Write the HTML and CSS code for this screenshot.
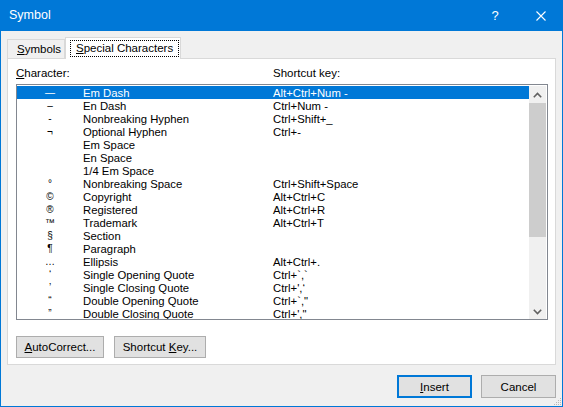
FILE: index.html
```html
<!DOCTYPE html>
<html>
<head>
<meta charset="utf-8">
<link rel="stylesheet" href="styles.css">
</head>
<body>
<div class="window">
  <div class="titlebar">
    <span class="title">Symbol</span>
    <span class="help">?</span>
    <span class="close"><svg width="10" height="10" viewBox="0 0 10 10"><path d="M0.5 0.5 L9.5 9.5 M9.5 0.5 L0.5 9.5" stroke="#fff" stroke-width="1.1" fill="none"/></svg></span>
  </div>
  <div class="content">
    <div class="tabs">
      <div class="tab"><u>S</u>ymbols</div>
      <div class="tab active"><span class="focus"><u>S</u>pecial Characters</span></div>
    </div>
    <div class="panel">
      <div class="heads">
        <span class="head-char"><u>C</u>haracter:</span>
        <span class="head-key">Shortcut key:</span>
      </div>
      <div class="list">
        <div class="rows">
          <div class="row sel"><span class="sym">—</span><span class="name">Em Dash</span><span class="key">Alt+Ctrl+Num -</span></div>
          <div class="row"><span class="sym">–</span><span class="name">En Dash</span><span class="key">Ctrl+Num -</span></div>
          <div class="row"><span class="sym">-</span><span class="name">Nonbreaking Hyphen</span><span class="key">Ctrl+Shift+_</span></div>
          <div class="row"><span class="sym">¬</span><span class="name">Optional Hyphen</span><span class="key">Ctrl+-</span></div>
          <div class="row"><span class="sym"></span><span class="name">Em Space</span><span class="key"></span></div>
          <div class="row"><span class="sym"></span><span class="name">En Space</span><span class="key"></span></div>
          <div class="row"><span class="sym"></span><span class="name">1/4 Em Space</span><span class="key"></span></div>
          <div class="row"><span class="sym">°</span><span class="name">Nonbreaking Space</span><span class="key">Ctrl+Shift+Space</span></div>
          <div class="row"><span class="sym">©</span><span class="name">Copyright</span><span class="key">Alt+Ctrl+C</span></div>
          <div class="row"><span class="sym">®</span><span class="name">Registered</span><span class="key">Alt+Ctrl+R</span></div>
          <div class="row"><span class="sym">™</span><span class="name">Trademark</span><span class="key">Alt+Ctrl+T</span></div>
          <div class="row"><span class="sym">§</span><span class="name">Section</span><span class="key"></span></div>
          <div class="row"><span class="sym">¶</span><span class="name">Paragraph</span><span class="key"></span></div>
          <div class="row"><span class="sym">…</span><span class="name">Ellipsis</span><span class="key">Alt+Ctrl+.</span></div>
          <div class="row"><span class="sym">‘</span><span class="name">Single Opening Quote</span><span class="key">Ctrl+`,`</span></div>
          <div class="row"><span class="sym">’</span><span class="name">Single Closing Quote</span><span class="key">Ctrl+',‘</span></div>
          <div class="row"><span class="sym">“</span><span class="name">Double Opening Quote</span><span class="key">Ctrl+`,"</span></div>
          <div class="row"><span class="sym">”</span><span class="name">Double Closing Quote</span><span class="key">Ctrl+',"</span></div>
        </div>
        <div class="scrollbar">
          <div class="sb-btn"><svg width="9" height="6" viewBox="0 0 9 6"><path d="M0.8 5.2 L4.5 1.5 L8.2 5.2" stroke="#606060" stroke-width="1.6" fill="none"/></svg></div>
          <div class="sb-track"><div class="sb-thumb"></div></div>
          <div class="sb-btn"><svg width="9" height="6" viewBox="0 0 9 6"><path d="M0.8 0.8 L4.5 4.5 L8.2 0.8" stroke="#606060" stroke-width="1.6" fill="none"/></svg></div>
        </div>
      </div>
      <div class="panel-buttons">
        <button class="btn btn-auto"><u>A</u>utoCorrect...</button>
        <button class="btn btn-short">Shortcut <u>K</u>ey...</button>
      </div>
    </div>
    <div class="footer">
      <button class="btn btn-foot default"><u>I</u>nsert</button>
      <button class="btn btn-foot">Cancel</button>
    </div>
  </div>
  <svg class="grip" width="10" height="10" viewBox="0 0 10 10"><g fill="#b8b8b8"><rect x="8" y="2" width="1" height="1"/><rect x="6" y="4" width="1" height="1"/><rect x="8" y="4" width="1" height="1"/><rect x="4" y="6" width="1" height="1"/><rect x="6" y="6" width="1" height="1"/><rect x="8" y="6" width="1" height="1"/><rect x="2" y="8" width="1" height="1"/><rect x="4" y="8" width="1" height="1"/><rect x="6" y="8" width="1" height="1"/><rect x="8" y="8" width="1" height="1"/></g></svg>
</div>
</body>
</html>
```
FILE: styles.css
```css
html, body {
  margin: 0;
  padding: 0;
}
body {
  font-family: "Liberation Sans", Arial, sans-serif;
  font-size: 11.5px;
  color: #000;
  background: #f0f0f0;
}
u {
  text-decoration: underline;
  text-underline-offset: 1px;
}
.window {
  position: relative;
  width: 563px;
  height: 407px;
  box-sizing: border-box;
  border: 1px solid #0078d7;
  border-top: none;
  background: #f0f0f0;
  display: flex;
  flex-direction: column;
  overflow: hidden;
}
.titlebar {
  height: 31px;
  flex: none;
  background: #0078d7;
  color: #fff;
  display: flex;
  align-items: center;
  padding-left: 8px;
  font-size: 12.5px;
}
.title {
  flex: 1;
  line-height: 16px;
  padding-bottom: 1px;
}
.help {
  font-size: 13px;
  width: 14px;
  text-align: center;
  margin-right: 34px;
  padding-bottom: 1px;
}
.close {
  display: flex;
  margin-right: 16px;
}
.content {
  flex: 1;
  display: flex;
  flex-direction: column;
  padding: 7px 6px 7px 6px;
}
.tabs {
  height: 21px;
  display: flex;
  align-items: flex-end;
  margin-bottom: -1px;
}
.tab {
  box-sizing: border-box;
  height: 19px;
  border: 1px solid #d9d9d9;
  border-bottom: none;
  background: #f0f0f0;
  padding: 1px 0 0 9px;
  width: 58px;
  line-height: 17px;
  margin-bottom: 1px;
}
.tab.active {
  position: relative;
  z-index: 1;
  height: 22px;
  width: 116px;
  margin-bottom: 0;
  border-left: 1px solid #d9d9d9;
  background: #fff;
  padding: 2px 0 0 4px;
  line-height: 15px;
}
.focus {
  display: inline-block;
  border: 1px dotted #000;
  padding: 0 5px 0 5px;
  line-height: 15px;
}
.panel {
  height: 307px;
  box-sizing: border-box;
  border: 1px solid #d9d9d9;
  background: #fff;
  padding: 0 7px 6px 8px;
  display: flex;
  flex-direction: column;
}
.heads {
  height: 25px;
  box-sizing: border-box;
  padding-top: 7px;
  line-height: 14px;
  display: grid;
  grid-template-columns: 257px 1fr;
}
.list {
  height: 236px;
  box-sizing: border-box;
  border: 1px solid #828790;
  padding-top: 1px;
  display: flex;
  overflow: hidden;
}
.rows {
  width: 512px;
  flex: none;
}
.row {
  height: 13px;
  line-height: 13px;
  font-size: 11.3px;
  display: grid;
  grid-template-columns: 66px 190px 1fr;
  white-space: nowrap;
}
.row .name, .row .key {
  padding-top: 1px;
  line-height: 12px;
}
.row.sel {
  background: #0078d7;
  color: #fff;
}
.sym {
  text-align: center;
  font-size: 10px;
}
.scrollbar {
  width: 17px;
  flex: none;
  background: #f0f0f0;
  display: flex;
  flex-direction: column;
  height: 234px;
}
.sb-btn {
  height: 17px;
  flex: none;
  display: flex;
  align-items: center;
  justify-content: center;
}
.sb-track {
  flex: 1;
}
.sb-thumb {
  height: 134px;
  background: #cdcdcd;
}
.panel-buttons {
  margin-top: 16px;
  display: flex;
  gap: 10px;
}
.btn {
  font-family: "Liberation Sans", Arial, sans-serif;
  font-size: 11.5px;
  color: #000;
  background: #e1e1e1;
  border: 1px solid #adadad;
  box-sizing: border-box;
  height: 22px;
  padding: 0;
  margin: 0;
  line-height: 18px;
}
.btn-auto {
  width: 88px;
}
.btn-short {
  width: 92px;
}
.footer {
  margin-top: 10px;
  display: flex;
  justify-content: flex-end;
  gap: 9px;
}
.btn-foot {
  width: 75px;
  height: 23px;
}
.btn-foot.default {
  border: 2px solid #0078d7;
}
.grip {
  position: absolute;
  right: 0;
  bottom: 0;
}
```
